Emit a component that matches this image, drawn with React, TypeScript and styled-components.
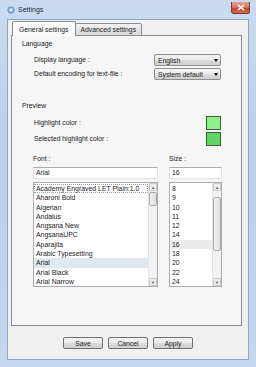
import React from "react";
import styled, { createGlobalStyle } from "styled-components";

const GlobalStyle = createGlobalStyle`
  html, body {
    margin: 0;
    padding: 0;
    background: #ffffff;
  }
  * {
    box-sizing: border-box;
  }
`;

const fonts = [
  "Academy Engraved LET Plain:1.0",
  "Aharoni Bold",
  "Algerian",
  "Andalus",
  "Angsana New",
  "AngsanaUPC",
  "Aparajita",
  "Arabic Typesetting",
  "Arial",
  "Arial Black",
  "Arial Narrow",
];

const sizes = ["8", "9", "10", "11", "12", "14", "16", "18", "20", "22", "24"];

function App() {
  return (
    <>
      <GlobalStyle />
      <Window>
        <TitleBar>
          <AppIcon viewBox="0 0 10 10">
            <circle cx="5" cy="5" r="4" fill="#9fc2e6" stroke="#4f7bb0" strokeWidth="1" />
            <circle cx="5" cy="5" r="1.5" fill="#e9f2fb" />
          </AppIcon>
          <Title>Settings</Title>
          <CloseButton>
            <svg width="8" height="7" viewBox="0 0 8 7">
              <path d="M1 1 L7 6 M7 1 L1 6" stroke="#ffffff" strokeWidth="1.6" />
            </svg>
          </CloseButton>
        </TitleBar>
        <Client>
          <TabBar>
            <Tab $active>General settings</Tab>
            <Tab>Advanced settings</Tab>
          </TabBar>
          <Panel>
            <GroupLabel $top={3}>Language</GroupLabel>
            <Indent $top={5}>
              <Row>
                <Label>Display language :</Label>
                <Select>
                  <span>English</span>
                  <Arrow />
                </Select>
              </Row>
              <Row>
                <Label>Default encoding for text-file :</Label>
                <Select>
                  <span>System default</span>
                  <Arrow />
                </Select>
              </Row>
            </Indent>
            <GroupLabel $top={21}>Preview</GroupLabel>
            <Indent $top={5}>
              <Row>
                <Label>Highlight color :</Label>
                <Swatch $color="#8ef08a" />
              </Row>
              <Row>
                <Label>Selected highlight color :</Label>
                <Swatch $color="#62d662" />
              </Row>
            </Indent>
            <FontGrid>
              <Label>Font :</Label>
              <Label>Size :</Label>
              <TextField>Arial</TextField>
              <TextField>16</TextField>
              <ListBox>
                <ListItems>
                  {fonts.map((f, i) => (
                    <ListItem key={f} $selected={f === "Arial"} $focus={i === 0}>
                      {f}
                    </ListItem>
                  ))}
                </ListItems>
                <ScrollBar>
                  <ScrollArrow>▲</ScrollArrow>
                  <Track>
                    <Thumb $top={1} $height={14} />
                  </Track>
                  <ScrollArrow>▼</ScrollArrow>
                </ScrollBar>
              </ListBox>
              <ListBox>
                <ListItems>
                  {sizes.map((s) => (
                    <ListItem key={s} $selected={s === "16"} $gray>
                      {s}
                    </ListItem>
                  ))}
                </ListItems>
                <ScrollBar>
                  <ScrollArrow>▲</ScrollArrow>
                  <Track>
                    <Thumb $top={6} $height={54} />
                  </Track>
                  <ScrollArrow>▼</ScrollArrow>
                </ScrollBar>
              </ListBox>
            </FontGrid>
          </Panel>
          <ButtonRow>
            <Button>Save</Button>
            <Button>Cancel</Button>
            <Button>Apply</Button>
          </ButtonRow>
        </Client>
      </Window>
    </>
  );
}

const Window = styled.div`
  width: 256px;
  height: 367px;
  display: flex;
  flex-direction: column;
  padding: 0 7px 7px 7px;
  background: linear-gradient(180deg, #c9dcf1 0%, #bad1ea 40%, #c3d8ef 100%);
  font-family: "Liberation Sans", Arial, sans-serif;
  font-size: 6.8px;
  color: #1a1a1a;
`;

const TitleBar = styled.div`
  height: 19px;
  display: flex;
  align-items: center;
`;

const AppIcon = styled.svg`
  width: 8px;
  height: 8px;
  margin-right: 3px;
`;

const Title = styled.span`
  font-size: 7px;
  color: #1b2c44;
`;

const CloseButton = styled.div`
  margin-left: auto;
  margin-right: -1px;
  margin-top: -3px;
  width: 19px;
  height: 12px;
  display: flex;
  align-items: center;
  justify-content: center;
  border: 1px solid #7b3a30;
  border-top: none;
  border-radius: 0 0 3px 3px;
  background: linear-gradient(180deg, #e6a394 0%, #d5725f 50%, #c2432c 55%, #d56b4f 100%);
`;

const Client = styled.div`
  flex: 1;
  display: flex;
  flex-direction: column;
  background: #f0f0f0;
  border: 1px solid #91a6c1;
  padding: 1px 6px 0 3px;
`;

const TabBar = styled.div`
  height: 15px;
  display: flex;
  align-items: flex-end;
  padding-left: 1px;
`;

const Tab = styled.div<{ $active?: boolean }>`
  height: ${(p) => (p.$active ? "15px" : "13px")};
  padding: 0 ${(p) => (p.$active ? "6px" : "5px")};
  margin-left: ${(p) => (p.$active ? "0" : "-1px")};
  display: flex;
  align-items: center;
  border: 1px solid #898c95;
  border-bottom: ${(p) => (p.$active ? "none" : "1px solid #898c95")};
  border-radius: 2px 2px 0 0;
  background: ${(p) =>
    p.$active ? "#fafafa" : "linear-gradient(180deg, #f2f2f2 0%, #e6e6e6 50%, #d9d9d9 100%)"};
  position: relative;
  z-index: ${(p) => (p.$active ? 2 : 1)};
`;

const Panel = styled.div`
  height: 291px;
  margin-top: -1px;
  border: 1px solid #898c95;
  background: #f6f6f6;
  padding: 0 20px 0 10px;
  display: flex;
  flex-direction: column;
`;

const GroupLabel = styled.div<{ $top: number }>`
  height: 10px;
  line-height: 10px;
  margin-top: ${(p) => p.$top}px;
`;

const Indent = styled.div<{ $top: number }>`
  margin-top: ${(p) => p.$top}px;
  margin-left: 12px;
  display: flex;
  flex-direction: column;
  gap: 2px;
`;

const Row = styled.div`
  display: flex;
  align-items: center;
  justify-content: space-between;
`;

const Label = styled.span`
  line-height: 10px;
`;

const Select = styled.div`
  width: 67px;
  height: 12px;
  display: flex;
  align-items: center;
  justify-content: space-between;
  padding: 0 2px 0 3px;
  border: 1px solid #8e8f8f;
  border-radius: 2px;
  background: linear-gradient(180deg, #f4f4f4 0%, #ebebeb 50%, #dddddd 51%, #d0d0d0 100%);
`;

const Arrow = styled.span`
  width: 0;
  height: 0;
  border-left: 2px solid transparent;
  border-right: 2px solid transparent;
  border-top: 3px solid #000000;
`;

const Swatch = styled.div<{ $color: string }>`
  width: 15px;
  height: 14px;
  background: ${(p) => p.$color};
  border: 1px solid #3f5f3f;
`;

const FontGrid = styled.div`
  margin-top: 8px;
  margin-left: 11px;
  display: grid;
  grid-template-columns: 125px 53px;
  column-gap: 11px;
  row-gap: 3px;
  grid-template-rows: 10px 12px 105px;
`;

const TextField = styled.div`
  height: 12px;
  line-height: 10px;
  padding-left: 2px;
  background: #ffffff;
  border: 1px solid #e3e3e3;
  border-top-color: #abadb3;
`;

const ListBox = styled.div`
  display: flex;
  border: 1px solid #abadb3;
  background: #ffffff;
  overflow: hidden;
`;

const ListItems = styled.div`
  flex: 1;
  padding-top: 1px;
  display: flex;
  flex-direction: column;
  font-size: 6.9px;
  min-width: 0;
`;

const ListItem = styled.div<{ $selected?: boolean; $focus?: boolean; $gray?: boolean }>`
  height: 9.3px;
  line-height: 9.3px;
  padding-left: 2px;
  white-space: nowrap;
  background: ${(p) => (p.$selected ? (p.$gray ? "#ececec" : "#dfe7f1") : "transparent")};
  outline: ${(p) => (p.$focus ? "1px dotted #9aa0a8" : "none")};
  outline-offset: -1px;
`;

const ScrollBar = styled.div`
  width: 9px;
  display: flex;
  flex-direction: column;
  background: #f2f2f2;
  border-left: 1px solid #e4e4e4;
`;

const ScrollArrow = styled.div`
  height: 8px;
  font-size: 4px;
  line-height: 8px;
  text-align: center;
  color: #555555;
  border: 1px solid #c9c9c9;
  border-radius: 1px;
  background: #ececec;
`;

const Track = styled.div`
  flex: 1;
  position: relative;
`;

const Thumb = styled.div<{ $top: number; $height: number }>`
  position: absolute;
  left: 0;
  right: 0;
  top: ${(p) => p.$top}px;
  height: ${(p) => p.$height}px;
  border: 1px solid #a9a9a9;
  border-radius: 2px;
  background: linear-gradient(90deg, #f2f2f2 0%, #e0e0e0 100%);
`;

const ButtonRow = styled.div`
  display: flex;
  justify-content: center;
  gap: 5px;
  margin-top: 11px;
  padding-left: 3px;
`;

const Button = styled.div`
  width: 40px;
  height: 12px;
  display: flex;
  align-items: center;
  justify-content: center;
  border: 1px solid #707070;
  border-radius: 2px;
  background: linear-gradient(180deg, #f2f2f2 0%, #ebebeb 50%, #dddddd 51%, #cfcfcf 100%);
`;

export default App;
